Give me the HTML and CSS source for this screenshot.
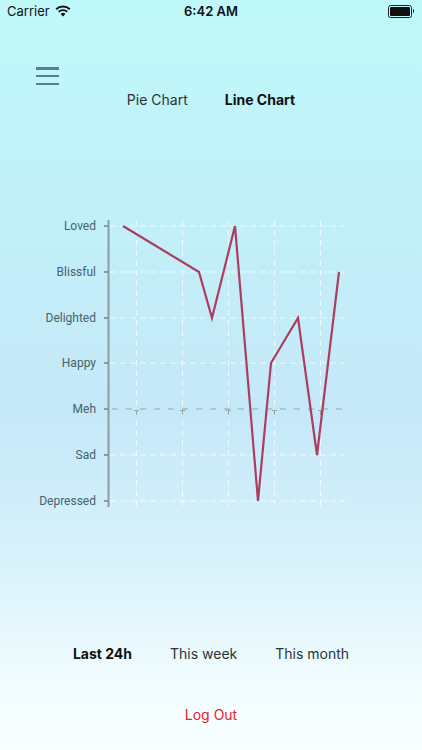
FILE: index.html
```html
<!DOCTYPE html>
<html lang="en">
<head>
    <meta charset="UTF-8">
    <meta name="viewport" content="width=device-width, initial-scale=1.0">
    <title>Mood Chart</title>
    <link rel="stylesheet" href="styles.css">
</head>
<body>
    <div class="status-bar">
        <div class="carrier">Carrier
            <svg class="wifi" width="16" height="12" viewBox="0 0 16 12">
                <path d="M8 11.5 L5.6 8.9 A3.4 3.4 0 0 1 10.4 8.9 Z" fill="#111"/>
                <path d="M3.7 6.9 A6.2 6.2 0 0 1 12.3 6.9" stroke="#111" stroke-width="1.9" fill="none"/>
                <path d="M1.2 4.3 A9.8 9.8 0 0 1 14.8 4.3" stroke="#111" stroke-width="1.9" fill="none"/>
            </svg>
        </div>
        <div class="time">6:42 AM</div>
        <div class="battery">
            <span class="battery-body"><span class="battery-fill"></span></span>
            <span class="battery-cap"></span>
        </div>
    </div>

    <div class="menu-btn">
        <span></span><span></span><span></span>
    </div>

    <div class="tabs">
        <span class="tab">Pie Chart</span>
        <span class="tab active">Line Chart</span>
    </div>

    <svg class="chart" width="422" height="320" viewBox="0 0 422 320">
        <g class="grid">
            <line x1="110" y1="26" x2="345" y2="26"/>
            <line x1="110" y1="72" x2="345" y2="72"/>
            <line x1="110" y1="118" x2="345" y2="118"/>
            <line x1="110" y1="163" x2="345" y2="163"/>
            <line x1="110" y1="255" x2="345" y2="255"/>
            <line x1="110" y1="301" x2="345" y2="301"/>
            <line x1="136.5" y1="20" x2="136.5" y2="307"/>
            <line x1="182.5" y1="20" x2="182.5" y2="307"/>
            <line x1="228.5" y1="20" x2="228.5" y2="307"/>
            <line x1="274.5" y1="20" x2="274.5" y2="307"/>
            <line x1="320.5" y1="20" x2="320.5" y2="307"/>
        </g>
        <line class="meh-line" x1="112" y1="209" x2="345" y2="209"/>
        <g class="meh-ticks">
            <path d="M134 210.5 H139 M136.5 210.5 V215"/>
            <path d="M180 210.5 H185 M182.5 210.5 V215"/>
            <path d="M226 210.5 H231 M228.5 210.5 V215"/>
            <path d="M272 210.5 H277 M274.5 210.5 V215"/>
            <path d="M318 210.5 H323 M320.5 210.5 V215"/>
        </g>
        <g class="axis">
            <line x1="108.5" y1="20" x2="108.5" y2="307"/>
            <line x1="104" y1="26" x2="108" y2="26"/>
            <line x1="104" y1="72" x2="108" y2="72"/>
            <line x1="104" y1="118" x2="108" y2="118"/>
            <line x1="104" y1="163" x2="108" y2="163"/>
            <line x1="104" y1="209" x2="108" y2="209"/>
            <line x1="104" y1="255" x2="108" y2="255"/>
            <line x1="104" y1="301" x2="108" y2="301"/>
        </g>
        <g class="labels">
            <text x="96" y="26">Loved</text>
            <text x="96" y="72">Blissful</text>
            <text x="96" y="118">Delighted</text>
            <text x="96" y="163">Happy</text>
            <text x="96" y="209">Meh</text>
            <text x="96" y="255">Sad</text>
            <text x="96" y="301">Depressed</text>
        </g>
        <polyline class="mood-line" points="123,26 199,72 212,118 235,26 258,301 271,163 298,118 317,255 339,72"/>
    </svg>

    <div class="ranges">
        <span class="range active">Last 24h</span>
        <span class="range">This week</span>
        <span class="range">This month</span>
    </div>

    <div class="logout">Log Out</div>
</body>
</html>
```

FILE: styles.css
```css
body {
    margin: 0;
    padding: 0;
    width: 422px;
    height: 750px;
    overflow: hidden;
    font-family: Inter, 'Liberation Sans', sans-serif;
    background: linear-gradient(to bottom, #bff9fa 0%, #c1f1f9 25%, #c5e8f8 55%, #d8f2fb 75%, #f3fdff 92%, #f7ffff 100%);
    color: #222;
}

.status-bar {
    height: 22px;
    display: flex;
    align-items: center;
    justify-content: space-between;
    padding: 0 8px 0 7px;
    font-size: 13px;
    position: relative;
}

.carrier {
    display: flex;
    align-items: center;
    gap: 5px;
    color: #111;
}

.time {
    position: absolute;
    left: 0;
    right: 0;
    text-align: center;
    font-weight: 600;
    color: #111;
}

.battery {
    display: flex;
    align-items: center;
}

.battery-body {
    width: 20px;
    height: 9px;
    border: 1px solid #222;
    border-radius: 2.5px;
    padding: 1px;
    box-sizing: content-box;
    display: flex;
}

.battery-fill {
    flex: 1;
    background: #111;
    border-radius: 1px;
}

.battery-cap {
    width: 1.5px;
    height: 4px;
    background: #222;
    margin-left: 1px;
    border-radius: 0 1px 1px 0;
}

.menu-btn {
    margin: 45px 0 0 35.5px;
    width: 23px;
    height: 18px;
    display: flex;
    flex-direction: column;
    justify-content: space-between;
}

.menu-btn span {
    display: block;
    height: 2.5px;
    background: #5e7d88;
}

.tabs {
    margin-top: 5px;
    display: flex;
    justify-content: center;
    gap: 37px;
    font-size: 14px;
    line-height: 20px;
}

.tab {
    color: #2b3438;
}

.tab.active {
    font-weight: 700;
    color: #111;
}

.chart {
    display: block;
    margin-top: 90px;
}

.grid line {
    stroke: #ffffff;
    stroke-opacity: 0.7;
    stroke-width: 1;
    stroke-dasharray: 6 4;
}

.meh-line {
    stroke: #93a7ad;
    stroke-width: 1;
    stroke-dasharray: 6 8;
}

.meh-ticks path {
    stroke: #93a7ad;
    stroke-width: 1;
    fill: none;
}

.axis line {
    stroke: #8b9ba1;
    stroke-width: 2;
}

.labels text {
    font-family: Roboto, 'Liberation Sans', sans-serif;
    font-size: 12px;
    fill: #46626c;
    text-anchor: end;
    dominant-baseline: central;
}

.mood-line {
    fill: none;
    stroke: #ad3d60;
    stroke-width: 2.2;
    stroke-linejoin: miter;
}

.ranges {
    margin-top: 124px;
    display: flex;
    justify-content: center;
    gap: 38px;
    font-size: 14px;
    line-height: 20px;
}

.range {
    color: #2a3236;
}

.range.active {
    font-weight: 700;
    color: #111;
}

.logout {
    margin-top: 41px;
    text-align: center;
    font-size: 14px;
    line-height: 20px;
    color: #e8222a;
}
```
